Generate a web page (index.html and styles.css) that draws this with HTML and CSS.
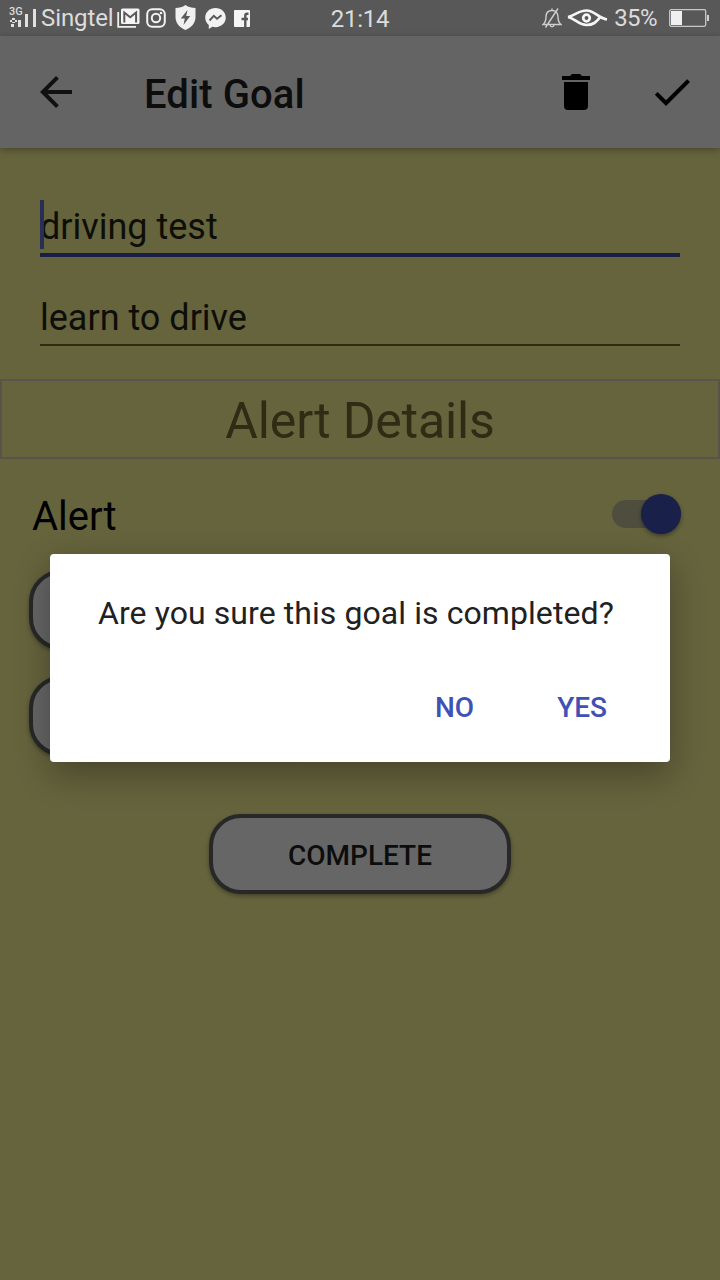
FILE: index.html
```html
<!DOCTYPE html>
<html lang="en">
<head>
<meta charset="utf-8">
<title>Edit Goal</title>
<link rel="stylesheet" href="styles.css">
</head>
<body>
<div class="screen">
  <header class="status">
    <div class="status-left">
      <div class="signal">
        <span class="network">3G</span>
        <svg width="28" height="20" viewBox="0 0 28 20" fill="#e0e0e0">
          <path d="M3 10h3v2H3zM1 12h2v2H1zM6 12h2v2H6zM3 14h3v1H3zM2 16h3v3H2zM9 12h3v7H9zM16 6h3v13h-3zM24 1h3v18h-3z"/>
        </svg>
      </div>
      <span class="carrier">Singtel</span>
      <svg class="ic-mail" width="23" height="20" viewBox="0 0 23 20" fill="none">
        <path d="M1.200 4v14.800H19" stroke="#efefef" stroke-width="1.800"/>
        <rect x="4" y="0.500" width="18.500" height="15.500" rx="1.500" fill="#f5f5f5"/>
        <path d="M7.300 14.500V4.500l5.900 4.700 5.900-4.700v10" stroke="#585858" stroke-width="2"/>
      </svg>
      <svg class="ic-insta" width="20" height="20" viewBox="0 0 20 20" fill="none" stroke="#f2f2f2" stroke-width="2">
        <rect x="1.200" y="1.200" width="17.600" height="17.600" rx="5"/>
        <circle cx="10" cy="10" r="4.200"/>
        <circle cx="15" cy="5" r="1.300" fill="#f2f2f2" stroke="none"/>
      </svg>
      <svg class="ic-shield" width="21" height="25" viewBox="0 0 21 25">
        <path d="M10.500 0C7.500 2.200 4 3 .5 3v9c0 6.200 4.200 10.500 10 13 5.800-2.500 10-6.800 10-13V3C17 3 13.500 2.200 10.500 0z" fill="#f0f0f0"/>
        <path d="M12.500 5L5.800 13.500h4L8.500 20l6.700-9h-4z" fill="#585858"/>
      </svg>
      <svg class="ic-chat" width="21" height="21" viewBox="0 0 21 21">
        <path d="M10.500 0C4.700 0 .2 4.200.2 9.600c0 3 1.400 5.700 3.600 7.500V21l3.500-2.200c1 .3 2.100.4 3.200.4 5.800 0 10.300-4.200 10.300-9.600S16.300 0 10.500 0z" fill="#f2f2f2"/>
        <path d="M4.500 12.500l4.300-4.700 3.200 3 4.500-3.500" fill="none" stroke="#585858" stroke-width="1.900"/>
      </svg>
      <svg class="ic-fb" width="16" height="17" viewBox="0 0 16 17">
        <rect width="16" height="17" rx="1" fill="#f5f5f5"/>
        <path d="M14.500 3.800h-1.300c-1.300 0-1.900.7-1.900 2V17M7.500 9h6.500" fill="none" stroke="#585858" stroke-width="2.400"/>
      </svg>
    </div>
    <span class="clock">21:14</span>
    <div class="status-right">
      <svg class="ic-bell" width="20" height="20" viewBox="0 0 20 20" fill="none" stroke="#cfcfcf" stroke-width="1.400">
        <path d="M1 16.500h18c-2.500-2-3-4-3-7.500 0-4-2.300-6.500-6-6.500S4 5 4 9c0 3.500-.5 5.500-3 7.500zM8 17c.3 2.500 3.700 2.500 4 0M10 .5v2M3.500 19.500L16 .5"/>
      </svg>
      <svg class="ic-eye" width="41" height="18" viewBox="0 0 41 18" fill="none" stroke="#f5f5f5" stroke-width="2.700">
        <path d="M1 8C8 6.500 11.500 1.500 19.500 1.500S31 9 40 10.500M1 8c7 1.500 11 8 18.500 8S29.500 12.500 33.500 8"/>
        <circle cx="19.500" cy="9" r="3.300"/>
      </svg>
      <span class="percent">35%</span>
      <svg class="ic-battery" width="41" height="18" viewBox="0 0 41 18">
        <rect x=".700" y=".700" width="36" height="16.600" rx="1.500" fill="none" stroke="#c8c8c8" stroke-width="1.300"/>
        <rect x="2" y="2" width="11" height="14" fill="#f0f0f0"/>
        <path d="M38 6h2v6h-2z" fill="#d0d0d0"/>
      </svg>
    </div>
  </header>

  <nav class="appbar">
    <svg class="back" width="48" height="48" viewBox="0 0 24 24" fill="#101010">
      <path d="M20 11H7.830l5.590-5.590L12 4l-8 8 8 8 1.410-1.410L7.830 13H20v-2z"/>
    </svg>
    <h1 class="title">Edit Goal</h1>
    <svg class="trash" width="48" height="48" viewBox="0 0 48 48">
      <path d="M12 14h24v24q0 4-4 4H16q-4 0-4-4zM10 8h8l2-2h8l2 2h8v4H10z"/>
    </svg>
    <svg width="48" height="48" viewBox="0 0 24 24">
      <path d="M9 16.170L4.830 12l-1.420 1.410L9 19 21 7l-1.410-1.410z"/>
    </svg>
  </nav>

  <main class="form">
    <div class="field focused"><span class="caret"></span>driving test</div>
    <div class="field">learn to drive</div>
    <h2 class="section">Alert Details</h2>
    <div class="alert-row">
      <span>Alert</span>
      <div class="switch"><div class="thumb"></div></div>
    </div>
    <div class="pill picker"></div>
    <div class="pill picker"></div>
    <div class="pill complete">COMPLETE</div>
  </main>

  <div class="dialog">
    <p class="message">Are you sure this goal is completed?</p>
    <div class="actions"><span>NO</span><span>YES</span></div>
  </div>
</div>
</body>
</html>
```

FILE: styles.css
```css
* { box-sizing: border-box; }
body { margin: 0; font-family: Roboto, "Liberation Sans", sans-serif; }
svg { display: block; flex: none; }

.screen {
  position: relative;
  width: 720px;
  height: 1280px;
  overflow: hidden;
  background: #66643d;
}

.status {
  display: flex;
  justify-content: space-between;
  height: 36px;
  background: #585858;
  color: #dcdcdc;
  font-size: 24px;
  line-height: 38px;
}
.status-left, .status-right { display: flex; align-items: center; width: 331px; }
.status-left { padding-left: 9px; }
.status-right { justify-content: flex-end; padding-right: 10px; }
.clock { letter-spacing: -0.3px; }
.signal { position: relative; flex: none; width: 28px; }
.network {
  position: absolute;
  left: 0;
  top: -1px;
  font-size: 11px;
  font-weight: 500;
  line-height: 10px;
}
.carrier { margin-left: 4px; width: 72px; letter-spacing: -0.1px; }
.ic-mail { margin-left: 4px; }
.ic-insta { margin-left: 6px; }
.ic-shield { margin-left: 9px; margin-top: -2px; }
.ic-chat { margin-left: 9px; }
.ic-fb { margin-left: 8px; }
.ic-eye { margin-left: 5px; }
.percent { margin: 0 12px 0 6px; letter-spacing: -0.6px; }

.appbar {
  position: relative;
  display: flex;
  align-items: center;
  height: 112px;
  padding: 0 24px 0 32px;
  background: #646464;
  box-shadow: 0 2px 7px rgba(0, 0, 0, 0.3);
}
.title {
  flex: 1;
  margin: 6px 0 0 64px;
  color: #0d0d0d;
  font-size: 40px;
  font-weight: 500;
  line-height: 48px;
  letter-spacing: 0.1px;
}
.trash { margin-right: 48px; }

.form { display: flex; flex-direction: column; }
.field {
  display: flex;
  align-items: center;
  position: relative;
  height: 54px;
  margin: 35px 40px 0;
  border-bottom: 2px solid #2f2b12;
  color: #0e0e08;
  font-size: 36px;
  line-height: 42px;
}
.field.focused {
  height: 59px;
  margin-top: 50px;
  padding-top: 2px;
  border-bottom: 4px solid #191f42;
}
.caret {
  position: absolute;
  left: 0;
  top: 2px;
  width: 4px;
  height: 49px;
  background: #292e55;
}
.section {
  height: 80px;
  margin: 33px 0 0;
  border: 2px solid #57554b;
  color: #2f2c16;
  font-size: 50px;
  font-weight: 400;
  line-height: 80px;
  letter-spacing: -0.15px;
  text-align: center;
}
.alert-row {
  display: flex;
  align-items: center;
  justify-content: space-between;
  height: 111px;
  padding: 4px 39px 0 32px;
  color: #000;
  font-size: 40px;
}
.switch {
  display: flex;
  align-items: center;
  justify-content: flex-end;
  width: 69px;
  height: 28px;
  margin-bottom: 6px;
  border-radius: 14px;
  background: #4f4e3e;
}
.thumb {
  flex: none;
  width: 40px;
  height: 40px;
  border-radius: 50%;
  background: #19204a;
  box-shadow: 0 2px 4px rgba(0, 0, 0, 0.4);
}
.pill {
  width: 302px;
  height: 80px;
  border: 4px solid #282828;
  border-radius: 32px;
  background: #666;
  box-shadow: 0 2px 4px rgba(0, 0, 0, 0.35);
}
.pill.picker { margin: 0 0 26px 29px; }
.pill.complete {
  align-self: center;
  margin-top: 32px;
  color: #0d0d0d;
  font-size: 28px;
  font-weight: 500;
  line-height: 75px;
  text-align: center;
}

.dialog {
  position: absolute;
  left: 50px;
  top: 554px;
  width: 620px;
  height: 208px;
  padding: 40px 48px 0;
  border-radius: 4px;
  background: #fff;
  box-shadow: 0 12px 34px rgba(0, 0, 0, 0.32);
}
.message {
  margin: 0;
  color: #212121;
  font-size: 32px;
  line-height: 38px;
  letter-spacing: 0.08px;
  white-space: nowrap;
}
.actions {
  display: flex;
  justify-content: flex-end;
  gap: 83px;
  margin-top: 59px;
  padding-right: 15px;
  color: #3f51b5;
  font-size: 28px;
  font-weight: 500;
  line-height: 34px;
}
```
